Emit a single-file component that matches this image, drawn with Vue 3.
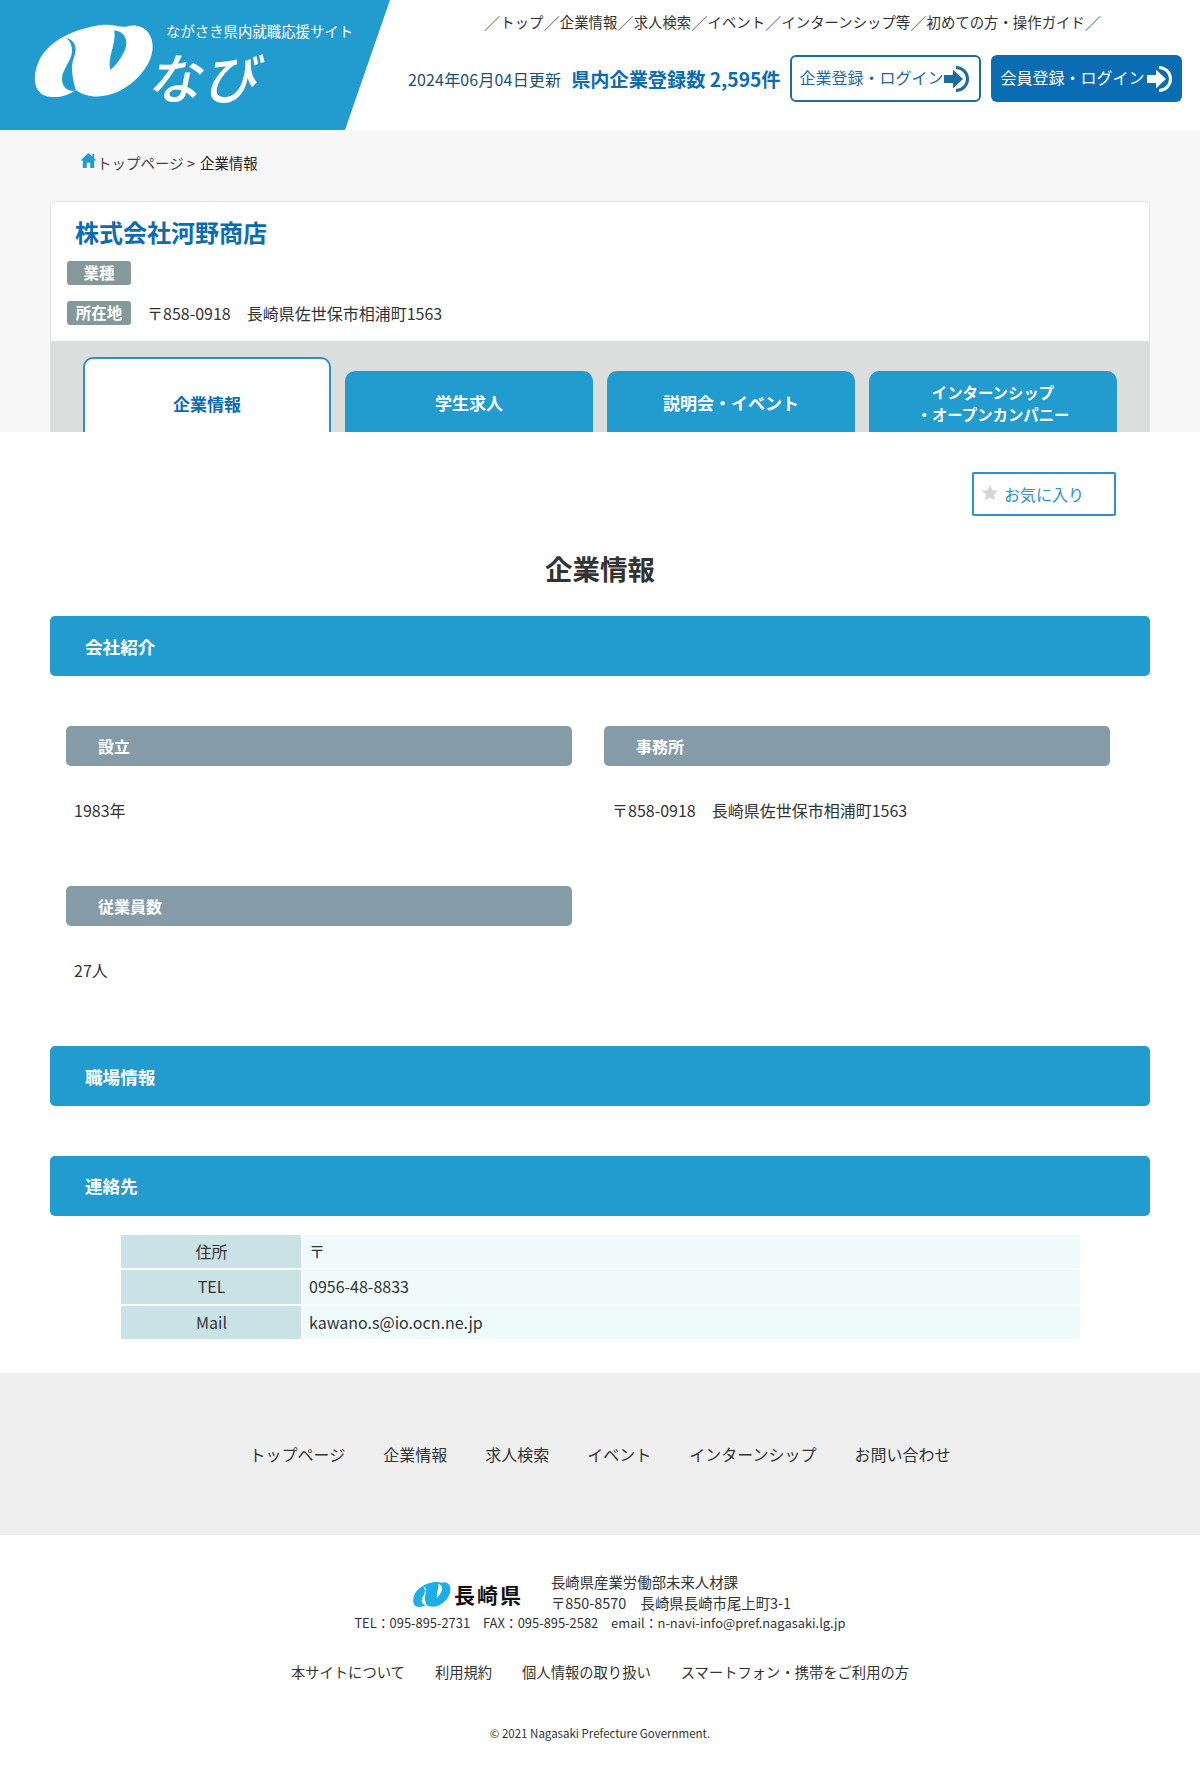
<script setup>
const tabs = [
  { label: '企業情報', active: true },
  { label: '学生求人' },
  { label: '説明会・イベント' },
  { label: 'インターンシップ\n・オープンカンパニー', small: true }
]
const topNav = ['トップ', '企業情報', '求人検索', 'イベント', 'インターンシップ等', '初めての方・操作ガイド']
const footNav = ['トップページ', '企業情報', '求人検索', 'イベント', 'インターンシップ', 'お問い合わせ']
const subNav = ['本サイトについて', '利用規約', '個人情報の取り扱い', 'スマートフォン・携帯をご利用の方']
const contact = [
  ['住所', '〒'],
  ['TEL', '0956-48-8833'],
  ['Mail', 'kawano.s@io.ocn.ne.jp']
]
</script>

<template>
  <div class="page">
    <header class="header">
      <div class="brand">
        <svg class="mark" viewBox="0 0 720 285" width="240" height="95" aria-hidden="true">
          <path fill="#fff" d="M55 245C10 240 0 190 25 135C50 85 110 50 190 33C240 22 265 38 285 35C330 22 365 50 365 95C365 150 310 215 240 238C200 250 160 245 135 225C105 245 80 248 55 245Z" />
          <path fill="#229bcf" d="M105 68C130 75 142 95 128 130C118 155 125 195 135 226C115 232 95 220 93 195C92 170 110 150 120 125C128 100 120 80 105 68Z" />
          <path fill="#229bcf" d="M250 46C278 50 292 72 284 98C276 122 258 148 238 165C228 125 256 90 250 46Z" />
        </svg>
        <div class="tagline">ながさき県内就職応援サイト</div>
        <div class="navi">なび</div>
      </div>
      <div class="head-right">
        <nav class="top-nav">
          <span class="slash">／</span>
          <template v-for="item in topNav" :key="item">
            <span>{{ item }}</span><span class="slash">／</span>
          </template>
        </nav>
        <div class="status">
          <span class="date">2024年06月04日更新</span>
          <span class="count">県内企業登録数 2,595件</span>
          <a class="login outline">企業登録・ログイン
            <svg viewBox="0 0 28 28" width="28" height="28" aria-hidden="true">
              <path d="M13 2.5A11.5 11.5 0 1 1 13 25.5" fill="none" stroke="currentColor" stroke-width="3" />
              <path d="M1 10H10V4.5L20 14L10 23.500V18H1Z" fill="currentColor" />
            </svg>
          </a>
          <a class="login solid">会員登録・ログイン
            <svg viewBox="0 0 28 28" width="28" height="28" aria-hidden="true">
              <path d="M13 2.500A11.500 11.500 0 1 1 13 25.500" fill="none" stroke="currentColor" stroke-width="3" />
              <path d="M1 10H10V4.500L20 14L10 23.500V18H1Z" fill="currentColor" />
            </svg>
          </a>
        </div>
      </div>
    </header>

    <section class="top-band">
      <div class="crumbs">
        <svg viewBox="0 0 18 18" width="17" height="17" aria-hidden="true">
          <path fill="#229bcf" d="M9 1L0.500 9H3V17H7.200V11.500H10.800V17H15V9H17.500L15 6.700V2H13V4.800Z" />
        </svg>
        <span class="crumb-link">トップページ &gt;</span>
        <span class="crumb-now">企業情報</span>
      </div>
      <div class="card">
        <div class="card-head">
          <h1 class="company">株式会社河野商店</h1>
          <div class="tag-row"><span class="tag">業種</span></div>
          <div class="tag-row second">
            <span class="tag">所在地</span>
            <span class="addr">〒858-0918　長崎県佐世保市相浦町1563</span>
          </div>
        </div>
        <div class="tabs">
          <div v-for="t in tabs" :key="t.label" class="tab" :class="{ active: t.active, small: t.small }">{{ t.label }}</div>
        </div>
      </div>
    </section>

    <main class="main">
      <div class="fav-row">
        <a class="fav">
          <svg viewBox="0 0 20 20" width="18" height="18" aria-hidden="true">
            <path fill="#d4d6d9" d="M10 1l2.700 5.900 6.300.7-4.700 4.300 1.300 6.300L10 15l-5.600 3.200 1.300-6.300L1 7.600l6.300-.7z" />
          </svg>
          <span>お気に入り</span>
        </a>
      </div>
      <h2 class="title">企業情報</h2>

      <div class="bar">会社紹介</div>
      <div class="grid">
        <div class="cell">
          <div class="sub">設立</div>
          <p class="val">1983年</p>
        </div>
        <div class="cell">
          <div class="sub">事務所</div>
          <p class="val">〒858-0918　長崎県佐世保市相浦町1563</p>
        </div>
        <div class="cell">
          <div class="sub">従業員数</div>
          <p class="val">27人</p>
        </div>
      </div>

      <div class="bar">職場情報</div>
      <div class="bar contact-bar">連絡先</div>
      <div class="contact">
        <template v-for="row in contact" :key="row[0]">
          <div class="c-head">{{ row[0] }}</div>
          <div class="c-val">{{ row[1] }}</div>
        </template>
      </div>
    </main>

    <nav class="foot-nav">
      <span v-for="item in footNav" :key="item">{{ item }}</span>
    </nav>

    <footer class="footer">
      <div class="org">
        <div class="org-logo">
          <svg viewBox="0 20 370 235" width="39" height="27" preserveAspectRatio="none" aria-hidden="true">
            <path fill="#1eaee6" d="M55 245C10 240 0 190 25 135C50 85 110 50 190 33C240 22 265 38 285 35C330 22 365 50 365 95C365 150 310 215 240 238C200 250 160 245 135 225C105 245 80 248 55 245Z" />
            <path fill="#fff" d="M105 68C130 75 142 95 128 130C118 155 125 195 135 226C115 232 95 220 93 195C92 170 110 150 120 125C128 100 120 80 105 68Z" />
            <path fill="#fff" d="M250 46C278 50 292 72 284 98C276 122 258 148 238 165C228 125 256 90 250 46Z" />
          </svg>
          <span class="pref">長崎県</span>
        </div>
        <div class="org-text">
          <div>長崎県産業労働部未来人材課</div>
          <div>〒850-8570　長崎県長崎市尾上町3-1</div>
        </div>
      </div>
      <div class="tel">TEL：095-895-2731　FAX：095-895-2582　email：n-navi-info@pref.nagasaki.lg.jp</div>
      <div class="sub-nav">
        <span v-for="item in subNav" :key="item">{{ item }}</span>
      </div>
      <div class="copy">© 2021 Nagasaki Prefecture Government.</div>
    </footer>
  </div>
</template>

<style>
html, body { margin: 0; background: #fff; }
</style>

<style scoped>
.page {
  width: 1200px;
  height: 1770px;
  overflow: hidden;
  background: #fff;
  color: #333;
  font-family: "Noto Sans CJK JP", "Noto Sans", sans-serif;
  font-size: 16px;
}

/* header */
.header { height: 130px; display: flex; background: #fff; }
.brand {
  width: 390px;
  height: 130px;
  flex: none;
  position: relative;
  background: #229bcf;
  clip-path: polygon(0 0, 390px 0, 345px 130px, 0 130px);
}
.mark { position: absolute; left: 31px; top: 15px; }
.tagline { position: absolute; left: 166px; top: 19px; color: #fff; font-size: 14.4px; line-height: 24px; white-space: nowrap; }
.navi {
  position: absolute;
  left: 152px;
  top: 41px;
  color: #fff;
  font-size: 54px;
  line-height: 70px;
  font-weight: 500;
  letter-spacing: 2px;
  transform: skewX(-14deg);
  white-space: nowrap;
}
.head-right { flex: 1; min-width: 0; display: flex; flex-direction: column; }
.top-nav {
  height: 43px;
  padding-left: 94px;
  display: flex;
  align-items: center;
  font-size: 14.4px;
  color: #333;
  white-space: nowrap;
}
.slash { color: #555; font-weight: 300; font-size: 16.3px; }
.status { display: flex; align-items: center; height: 47px; margin-top: 12px; padding-left: 18px; }
.date { font-size: 16px; letter-spacing: 0.16px; color: #1d4f73; white-space: nowrap; }
.count { font-size: 19.2px; font-weight: 700; color: #0a6cb2; margin-left: 10px; white-space: nowrap; }
.login {
  box-sizing: border-box;
  width: 191px;
  height: 47px;
  border-radius: 6px;
  display: flex;
  align-items: center;
  justify-content: space-between;
  padding: 0 8px 4px 8px;
  font-size: 16px;
  white-space: nowrap;
}
.login svg { flex: none; margin: 4px 0 0 -6px; }
.outline { margin-left: 9px; border: 2px solid #1b6c9f; color: #1b6c9f; background: #fff; }
.solid { margin-left: 10px; background: #0a6cb2; color: #fff; padding-left: 10px; }

/* top band */
.top-band { height: 302px; background: #f7f7f7; overflow: hidden; }
.crumbs { height: 71px; padding: 0 0 6px 80px; display: flex; align-items: center; font-size: 14.5px; box-sizing: border-box; }
.crumbs svg { margin-top: -4px; flex: none; }
.crumb-link { color: #444; margin-left: 0; }
.crumb-now { color: #222; margin-left: 5px; font-size: 14.4px; }
.card {
  margin: 0 50px;
  background: #fff;
  border: 1px solid #e0e0e0;
  border-bottom: 0;
  border-radius: 5px 5px 0 0;
  box-sizing: border-box;
}
.card-head { height: 139px; box-sizing: border-box; padding: 0 0 0 16px; }
.company { margin: 0 0 0 8px; font-size: 24px; line-height: 60px; height: 59px; font-weight: 700; color: #0a6cb2; }
.tag-row { display: flex; align-items: center; height: 24px; }
.tag-row.second { margin-top: 16px; }
.tag {
  width: 64px;
  height: 24px;
  line-height: 23px;
  border-radius: 3px;
  background: #85999b;
  color: #fff;
  font-size: 15.5px;
  font-weight: 700;
  text-align: center;
}
.addr { margin-left: 16px; color: #333; font-size: 16px; }
.tabs { background: #dcdddd; padding: 16px 32px 0; display: flex; align-items: flex-start; gap: 14px; height: 200px; }
.tab {
  width: 248px;
  height: 200px;
  margin-top: 14px;
  box-sizing: border-box;
  padding-top: 9px;
  background: #229bcf;
  color: #fff;
  border-radius: 10px 10px 0 0;
  font-weight: 700;
  font-size: 17px;
  line-height: 45px;
  text-align: center;
  white-space: pre-line;
}
.tab.small { font-size: 15.4px; line-height: 22px; padding-top: 10px; }
.tab.active {
  margin-top: 0;
  padding-top: 22px;
  background: #fff;
  color: #0a6cb2;
  border: 2px solid #2a93c4;
  font-size: 17px;
}

/* main */
.main { padding: 40px 50px 0; height: 941px; box-sizing: border-box; }
.fav-row { display: flex; justify-content: flex-end; padding-right: 34px; }
.fav {
  box-sizing: border-box;
  width: 144px;
  height: 44px;
  border: 2px solid #2d8fd5;
  border-radius: 2px;
  display: flex;
  align-items: center;
  padding-left: 7px;
  color: #2d8fd5;
  font-size: 16px;
}
.fav svg { margin-top: -3px; margin-right: 5px; }
.title { margin: 27px 0 0; height: 73px; text-align: center; font-size: 27.5px; line-height: 50px; font-weight: 700; color: #333; }
.bar {
  height: 60px;
  border-radius: 5px;
  background: #229bcf;
  color: #fff;
  font-size: 17.6px;
  font-weight: 700;
  line-height: 61px;
  padding-left: 35px;
}
.grid {
  display: grid;
  grid-template-columns: 506px 506px;
  column-gap: 32px;
  padding: 50px 0 0 16px;
  height: 370px;
  box-sizing: border-box;
  grid-auto-rows: 160px;
}
.sub {
  height: 40px;
  border-radius: 5px;
  background: #859ca8;
  color: #fff;
  font-size: 16px;
  font-weight: 700;
  line-height: 40px;
  padding-left: 32px;
}
.val { margin: 0; padding: 27px 0 0 8px; line-height: 34px; color: #333; }
.contact-bar { margin-top: 50px; line-height: 59px; }
.contact {
  display: grid;
  grid-template-columns: 181px 778px;
  gap: 2px 0;
  margin: 19px 0 0 71px;
  grid-auto-rows: 33.33px;
}
.c-head { background: #c9e2e5; text-align: center; line-height: 33px; padding-left: 1px; border-right: 1px solid #fff; }
.c-val { background: #effafa; padding-left: 7px; line-height: 33px; }

/* foot nav */
.foot-nav {
  height: 162px;
  background: #efefef;
  display: flex;
  justify-content: center;
  align-items: center;
  gap: 38px;
  color: #333;
  padding-bottom: 1px;
  box-sizing: border-box;
}

/* footer */
.footer { height: 235px; text-align: center; color: #333; overflow: hidden; }
.org { display: flex; justify-content: center; padding: 36px 0 0; height: 60px; box-sizing: content-box; }
.org-logo { display: flex; align-items: center; height: 46px; margin-right: 28px; margin-left: 3px; }
.pref { font-size: 21px; font-weight: 700; color: #111; letter-spacing: 2px; margin-left: 3px; line-height: 30px; }
.org-text { text-align: left; font-size: 14.4px; line-height: 21px; margin-left: 0; }
.tel { font-size: 12.9px; line-height: 20px; margin-top: -18px; }
.sub-nav { display: flex; justify-content: center; gap: 30px; font-size: 14.3px; line-height: 22px; margin-top: 28px; }
.copy { font-size: 11.5px; line-height: 18px; margin-top: 41px; }
</style>
